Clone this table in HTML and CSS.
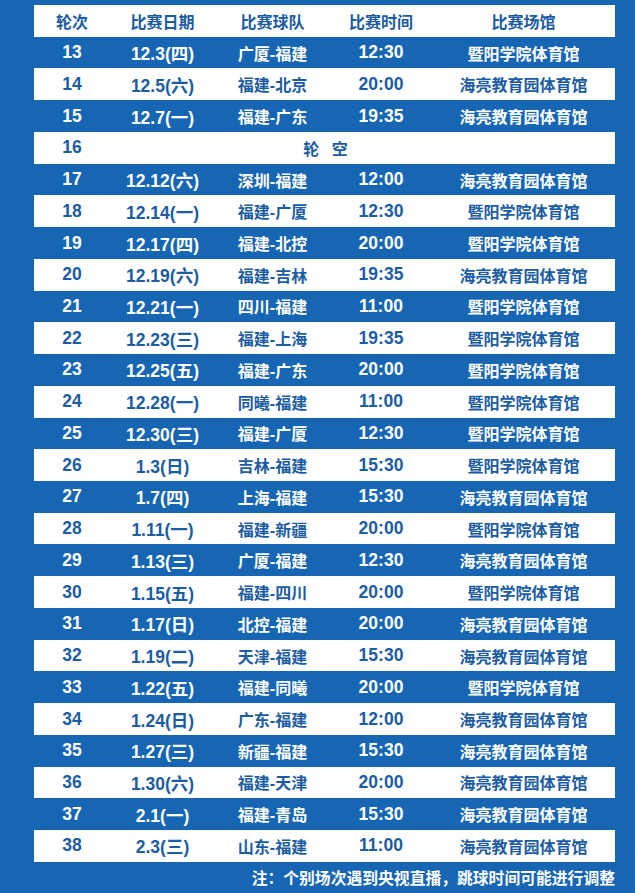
FILE: index.html
```html
<!DOCTYPE html>
<html lang="zh">
<head>
<meta charset="utf-8">
<title>赛程</title>
<link rel="stylesheet" href="styles.css">
</head>
<body>
<div class="page">
  <div class="schedule">
    <div class="row light head"><span>轮次</span><span>比赛日期</span><span>比赛球队</span><span>比赛时间</span><span>比赛场馆</span></div>
    <div class="row dark"><span>13</span><span>12.3(四)</span><span>广厦-福建</span><span>12:30</span><span>暨阳学院体育馆</span></div>
    <div class="row light"><span>14</span><span>12.5(六)</span><span>福建-北京</span><span>20:00</span><span>海亮教育园体育馆</span></div>
    <div class="row dark"><span>15</span><span>12.7(一)</span><span>福建-广东</span><span>19:35</span><span>海亮教育园体育馆</span></div>
    <div class="row light bye"><span>16</span><span class="bye-text">轮 空</span></div>
    <div class="row dark"><span>17</span><span>12.12(六)</span><span>深圳-福建</span><span>12:00</span><span>海亮教育园体育馆</span></div>
    <div class="row light"><span>18</span><span>12.14(一)</span><span>福建-广厦</span><span>12:30</span><span>暨阳学院体育馆</span></div>
    <div class="row dark"><span>19</span><span>12.17(四)</span><span>福建-北控</span><span>20:00</span><span>暨阳学院体育馆</span></div>
    <div class="row light"><span>20</span><span>12.19(六)</span><span>福建-吉林</span><span>19:35</span><span>海亮教育园体育馆</span></div>
    <div class="row dark"><span>21</span><span>12.21(一)</span><span>四川-福建</span><span>11:00</span><span>暨阳学院体育馆</span></div>
    <div class="row light"><span>22</span><span>12.23(三)</span><span>福建-上海</span><span>19:35</span><span>暨阳学院体育馆</span></div>
    <div class="row dark"><span>23</span><span>12.25(五)</span><span>福建-广东</span><span>20:00</span><span>暨阳学院体育馆</span></div>
    <div class="row light"><span>24</span><span>12.28(一)</span><span>同曦-福建</span><span>11:00</span><span>暨阳学院体育馆</span></div>
    <div class="row dark"><span>25</span><span>12.30(三)</span><span>福建-广厦</span><span>12:30</span><span>暨阳学院体育馆</span></div>
    <div class="row light"><span>26</span><span>1.3(日)</span><span>吉林-福建</span><span>15:30</span><span>暨阳学院体育馆</span></div>
    <div class="row dark"><span>27</span><span>1.7(四)</span><span>上海-福建</span><span>15:30</span><span>海亮教育园体育馆</span></div>
    <div class="row light"><span>28</span><span>1.11(一)</span><span>福建-新疆</span><span>20:00</span><span>暨阳学院体育馆</span></div>
    <div class="row dark"><span>29</span><span>1.13(三)</span><span>广厦-福建</span><span>12:30</span><span>海亮教育园体育馆</span></div>
    <div class="row light"><span>30</span><span>1.15(五)</span><span>福建-四川</span><span>20:00</span><span>暨阳学院体育馆</span></div>
    <div class="row dark"><span>31</span><span>1.17(日)</span><span>北控-福建</span><span>20:00</span><span>海亮教育园体育馆</span></div>
    <div class="row light"><span>32</span><span>1.19(二)</span><span>天津-福建</span><span>15:30</span><span>海亮教育园体育馆</span></div>
    <div class="row dark"><span>33</span><span>1.22(五)</span><span>福建-同曦</span><span>20:00</span><span>暨阳学院体育馆</span></div>
    <div class="row light"><span>34</span><span>1.24(日)</span><span>广东-福建</span><span>12:00</span><span>海亮教育园体育馆</span></div>
    <div class="row dark"><span>35</span><span>1.27(三)</span><span>新疆-福建</span><span>15:30</span><span>海亮教育园体育馆</span></div>
    <div class="row light"><span>36</span><span>1.30(六)</span><span>福建-天津</span><span>20:00</span><span>海亮教育园体育馆</span></div>
    <div class="row dark"><span>37</span><span>2.1(一)</span><span>福建-青岛</span><span>15:30</span><span>海亮教育园体育馆</span></div>
    <div class="row light"><span>38</span><span>2.3(三)</span><span>山东-福建</span><span>11:00</span><span>海亮教育园体育馆</span></div>
  </div>
  <p class="note">注：个别场次遇到央视直播，跳球时间可能进行调整</p>
</div>
</body>
</html>
```
FILE: styles.css
```css
html, body {
  margin: 0;
  padding: 0;
  background: #1766b4;
}
.page {
  width: 635px;
  height: 893px;
  box-sizing: border-box;
  padding: 5px 20px 0 34px;
  font-family: "Liberation Sans", "Noto Sans CJK SC", sans-serif;
  font-weight: 700;
  font-size: 16px;
}
.schedule {
  display: flex;
  flex-direction: column;
  width: 581px;
}
.row {
  display: grid;
  grid-template-columns: 76px 105px 115px 102px 183px;
  height: 31.74px;
  align-items: center;
  text-align: center;
  white-space: nowrap;
}
.row span:nth-child(1),
.row span:nth-child(2),
.row span:nth-child(4) {
  font-size: 17.5px;
}
.row.head span {
  font-size: 16px;
}
.row.light {
  background: #ffffff;
  color: #1c5ca3;
}
.row.dark {
  color: #ffffff;
}
.row.bye {
  grid-template-columns: 76px 505px;
}
.row.bye .bye-text {
  font-size: 16px;
  padding-right: 74px;
  word-spacing: 8px;
}
.note {
  margin: 4px 0 0 0;
  width: 581px;
  text-align: right;
  color: #ffffff;
  font-size: 15.8px;
  font-family: "Noto Sans CJK SC", sans-serif;
}
```
